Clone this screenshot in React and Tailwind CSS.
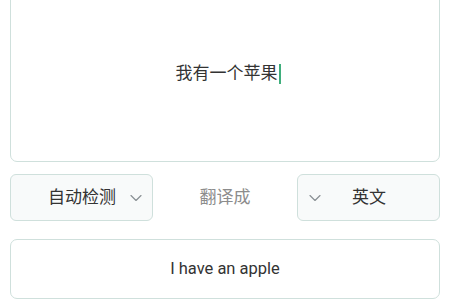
import { ChevronDown } from "lucide-react";

export default function App() {
    return (
        <div
            className="w-[450px] h-[305px] overflow-hidden bg-white px-[10px]"
            style={{ fontFamily: "Roboto, 'Noto Sans CJK SC', sans-serif" }}
        >
            <div className="-mt-[15px] h-[177px] flex items-center justify-center pl-[6px] border border-[#cfe0dc] rounded-[7px] bg-white">
                <span className="text-[17px] text-[#333] leading-none">我有一个苹果</span>
                <span className="w-[2px] h-[20px] bg-[#3fae7c] ml-[1px]" />
            </div>
            <div className="flex items-center mt-[12px]">
                <div className="flex items-center w-[143px] h-[47px] pl-[37px] border border-[#cfe0dc] rounded-[6px] bg-[#f8fafa]">
                    <span className="text-[17px] text-[#333]">自动检测</span>
                    <ChevronDown className="w-[20px] h-[20px] text-[#8a9094] ml-[10px]" strokeWidth={1.4} />
                </div>
                <div className="flex-1 text-center text-[17px] text-[#8c8c8c]">翻译成</div>
                <div className="flex items-center w-[143px] h-[47px] pl-[7px] border border-[#cfe0dc] rounded-[6px] bg-[#f8fafa]">
                    <ChevronDown className="w-[20px] h-[20px] text-[#8a9094] mr-[27px]" strokeWidth={1.4} />
                    <span className="text-[17px] text-[#333]">英文</span>
                </div>
            </div>
            <div className="mt-[18px] h-[60px] flex items-center justify-center border border-[#cfe0dc] rounded-[7px]">
                <span className="text-[16.5px] text-[#333]">I have an apple</span>
            </div>
        </div>
    );
}
